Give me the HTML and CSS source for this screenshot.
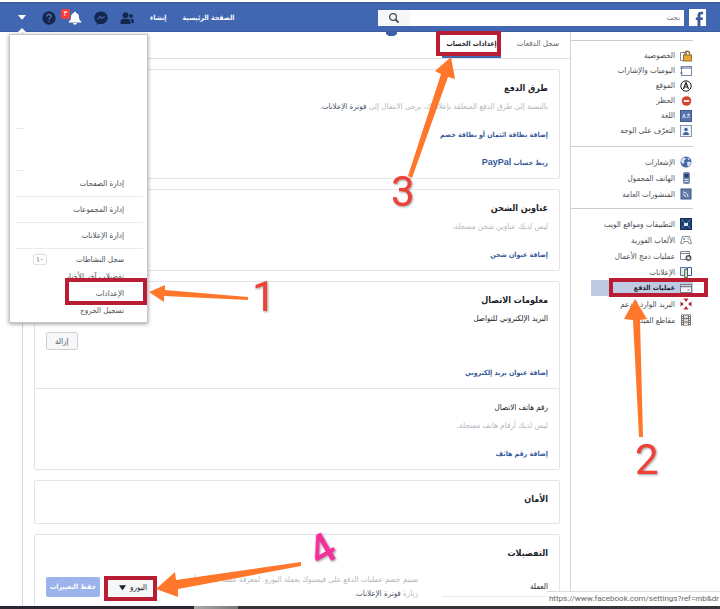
FILE: index.html
```html
<!DOCTYPE html>
<html lang="ar" dir="rtl">
<head>
    <meta charset="UTF-8">
    <meta name="viewport" content="width=device-width, initial-scale=1.0">
    <title>إعدادات الحساب</title>
    <link rel="stylesheet" href="styles.css">
</head>
<body>

<header class="topbar">
    <a class="logo" href="#" aria-label="Facebook">
        <svg viewBox="0 0 17 17" width="17" height="17"><rect width="17" height="17" fill="#fff"/><path d="M8.5 17v-6H6.8V8.4h1.7V6.6c0-2.6 1.4-3.9 3.7-3.9h1.9v2.5h-1.4c-1 0-1.3.5-1.3 1.4v1.8H14l-.4 2.6h-2.2v6z" fill="#3b5998"/></svg>
    </a>
    <form class="search">
        <input type="text" placeholder="بحث" aria-label="بحث">
        <button type="button" aria-label="بحث">
            <svg viewBox="0 0 12 12" width="12" height="12" fill="none" stroke="#444950"><circle cx="5" cy="5" r="3.4" stroke-width="1.3"/><path d="M7.6 7.6l3 3" stroke-width="1.8"/></svg>
        </button>
    </form>
    <nav class="links">
        <a href="#">الصفحة الرئيسية</a>
        <a href="#">إنشاء</a>
    </nav>
    <nav class="icons">
        <a href="#" aria-label="الأصدقاء"><svg viewBox="0 0 14 14" width="14" height="14" fill="#14284f"><circle cx="5.5" cy="4.2" r="2.9"/><path d="M.5 13v-2.2c0-2 1.6-3 3.2-3h3.6c1.8 0 3.2 1.200 3.200 3V13z"/><circle cx="11" cy="5" r="1.900"/><path d="M10.400 7.800h1.300c1.300 0 2.100.9 2.100 2.100V12h-2.400v-1.700c0-1-.4-1.900-1-2.500z"/></svg></a>
        <a href="#" aria-label="الرسائل"><svg viewBox="0 0 14 14" width="14" height="14"><path d="M7 .4C3.200.4.300 3.200.300 6.700c0 2 .9 3.600 2.400 4.800V14l2.200-1.200c.7.200 1.400.3 2.100.3 3.800 0 6.700-2.800 6.700-6.400S10.800.4 7 .4z" fill="#14284f"/><path d="M3.500 8.300l2.600-2.800 1.900 1.700 2.600-1.700" fill="none" stroke="#4267b2" stroke-width="1.200"/></svg></a>
        <a class="bell" href="#" aria-label="الإشعارات"><svg viewBox="0 0 14 14" width="14" height="14" fill="#fff"><path d="M7 .8c.7 0 1.100.5 1.100 1.200C10.200 2.500 11 4 11 6c0 2.500.7 3.400 2.200 4.500v1H.8v-1C2.300 9.400 3 8.500 3 6c0-2 .8-3.500 2.900-4C5.900 1.300 6.300.8 7 .8zM5.200 12h3.600c0 1-.8 1.700-1.800 1.700S5.200 13 5.200 12z"/></svg><span class="count">٣</span></a>
        <a href="#" aria-label="مساعدة"><svg viewBox="0 0 14 14" width="14" height="14"><circle cx="7" cy="7" r="6.700" fill="#14284f"/><path d="M4.900 5.600C4.900 4.300 5.800 3.500 7 3.500s2.100.8 2.100 1.900C9.100 7 7 7 7 8.600M7 9.700v1.300" fill="none" stroke="#5674b0" stroke-width="1.300"/></svg></a>
        <a class="caret" href="#" aria-label="القائمة"><svg viewBox="0 0 8 5" width="8" height="5"><path d="M0 0h8L4.600 4.300H3.400z" fill="#fff"/></svg></a>
    </nav>
    <ul class="menu">
        <li class="stub"></li>
        <li class="stub"></li>
        <li class="line"><a href="#">إدارة الصفحات</a></li>
        <li class="line"><a href="#">إدارة المجموعات</a></li>
        <li class="line"><a href="#">إدارة الإعلانات</a></li>
        <li class="log"><a href="#">سجل النشاطات</a><span class="tag">١٠</span></li>
        <li><a href="#">تفضيلات آخر الأخبار</a></li>
        <li><a href="#">الإعدادات</a></li>
        <li><a href="#">تسجيل الخروج</a></li>
    </ul>
</header>

<div class="page">
    <aside class="sidebar">
        <ul class="tight">
            <li><svg viewBox="0 0 12 12"><path d="M.5 2.500h6v8h-6z" fill="#fff" stroke="#7b88a5"/><path d="M5 5V3.500a2.300 2.300 0 0 1 4.600 0V5" fill="none" stroke="#8a7333" stroke-width="1.400"/><rect x="3.500" y="5" width="8" height="6" fill="#e6a733" stroke="#96712a"/></svg><a href="#">الخصوصية</a></li>
            <li><svg viewBox="0 0 12 12"><rect x="1.500" y="1.500" width="10" height="9" fill="#fff" stroke="#7b88a5"/><path d="M2 3h9" stroke="#a9b5cf" stroke-width="2"/><path d="M0 3h3M0 8h3" stroke="#6b7fa8"/></svg><a href="#">اليوميات والإشارات</a></li>
            <li><svg viewBox="0 0 12 12" fill="none" stroke="#222"><circle cx="6" cy="6" r="5.200"/><path d="M3.500 9L6 2.500 8.500 9M4.500 7h3" stroke-width="1.200"/></svg><a href="#">الموقع</a></li>
            <li><svg viewBox="0 0 12 12"><circle cx="6.500" cy="6" r="4.800" fill="#d5452f"/><path d="M3.800 6h5.400" stroke="#fff" stroke-width="1.800"/></svg><a href="#">الحظر</a></li>
            <li><svg viewBox="0 0 12 12"><rect x=".5" y=".5" width="11" height="11" fill="#5a74ad" stroke="#43598c"/><path d="M2.500 8l1.500-4 1.500 4M3 7h2M7 4.500h3M8.500 3.500v1M7 8l2.600-3.500M7.600 5.500L10 8" fill="none" stroke="#dfe6f5" stroke-width=".8"/></svg><a href="#">اللغة</a></li>
            <li><svg viewBox="0 0 12 12"><rect x=".5" y=".5" width="11" height="11" fill="#eef2f9" stroke="#8795b5"/><circle cx="6" cy="4.500" r="1.700" fill="#425f9c"/><path d="M3 10c0-2 1.300-3 3-3s3 1 3 3z" fill="#425f9c"/></svg><a href="#">التعرّف على الوجه</a></li>
        </ul>
        <ul>
            <li><svg viewBox="0 0 12 12"><circle cx="6" cy="6" r="5.500" fill="#4568a8"/><path d="M2 2.500l3-1 1 1.500-2 1.500.5 2L3 8 .8 5.500zM7 6l3-.5 1 1.500-2 3.500-1.500-.5zM7.500 1.500l2.500 1.800-2 .7z" fill="#dbe5f4"/></svg><a href="#">الإشعارات</a></li>
            <li><svg viewBox="0 0 12 12"><rect x="3.500" y=".5" width="6" height="11" rx="1" fill="#6680b3" stroke="#7c899f"/><rect x="4.500" y="2" width="4" height="3.500" fill="#263d70"/><path d="M4.500 7.500h4M4.500 9.500h4" stroke="#dce4f2"/></svg><a href="#">الهاتف المحمول</a></li>
            <li><svg viewBox="0 0 12 12"><rect x="1" y="1" width="10" height="10" fill="#627ba9" stroke="#43577f"/><path d="M3 4c2.800 0 5 2.200 5 5M3 6.500C4.400 6.500 5.500 7.600 5.500 9" fill="none" stroke="#e2e9f5"/></svg><a href="#">المنشورات العامة</a></li>
        </ul>
        <ul>
            <li><svg viewBox="0 0 12 12"><rect x=".5" y=".5" width="11" height="11" fill="#1d3f70" stroke="#16305a"/><path d="M1.500 1.500l9 9M10.500 1.500l-9 9" stroke="#6089bd"/><rect x="4" y="5" width="4" height="3" fill="#d7e4f4"/></svg><a href="#">التطبيقات ومواقع الويب</a></li>
            <li><svg viewBox="0 0 12 12" fill="none" stroke="#898f9a"><path d="M2.500 2.500h7L11.400 9.500H9L8 7.500H4L3 9.500H.6z"/><path d="M3 5h2M4 4v2M7.500 5h1.500"/></svg><a href="#">الألعاب الفورية</a></li>
            <li><svg viewBox="0 0 12 12"><path d="M.5 1.500h9v8h-9zM.5 3.500h9" fill="#fff" stroke="#80858f"/><circle cx="8.500" cy="8" r="2.300" fill="#ddd" stroke="#555" stroke-width="1.400"/></svg><a href="#">عمليات دمج الأعمال</a></li>
            <li><svg viewBox="0 0 12 12"><path d="M.5 1.500h6v8h-6z" fill="#e4eaf4" stroke="#566f9f"/><path d="M4.500 3.500h3v8h-3z" fill="#cbdcab" stroke="#607d3d"/><path d="M7.500 1.500h4v8h-4z" fill="#fff" stroke="#3c5d98"/></svg><a href="#">الإعلانات</a></li>
            <li class="selected"><svg viewBox="0 0 12 12"><rect x=".5" y="2.500" width="11" height="8" fill="#f3f5f8" stroke="#777f8f"/><path d="M1 4.500h10" stroke="#777f8f" stroke-width="1.500"/><path d="M7.500 8h2" stroke="#777f8f"/></svg><a href="#">عمليات الدفع</a></li>
            <li><svg viewBox="0 0 12 12"><path d="M3.500.5h5L6 4zM3.500 11.500h5L6 8zM.5 3.500v5L4 6zM11.500 3.500v5L8 6z" fill="#b22632"/><path d="M1.500 2.500l1-1M9.500 1.500l1 1M1.500 9.500l1 1M9.500 10.500l1-1" stroke="#d9dce1"/></svg><a href="#">البريد الوارد للدعم</a></li>
            <li><svg viewBox="0 0 12 12"><rect x="1" y=".5" width="10" height="11" fill="#77716c"/><path d="M4 1.500h4v2.500H4zM4 5h4v2.500H4zM4 8.500h4V11H4z" fill="#dedbd7"/><path d="M2.500 1v10M9.500 1v10" stroke="#fff" stroke-dasharray="1 1"/></svg><a href="#">مقاطع الفيديو</a></li>
        </ul>
    </aside>

    <main class="content">
        <nav class="tabs">
            <a href="#">سجل الدفعات</a>
            <a class="active" href="#">إعدادات الحساب</a>
        </nav>

        <section class="card">
            <div class="block">
                <h2>طرق الدفع</h2>
                <p class="muted">بالنسبة إلى طرق الدفع المتعلقة بإعلاناتك، يرجى الانتقال إلى <a href="#">فوترة الإعلانات</a>.</p>
                <a class="action" href="#">إضافة بطاقة ائتمان أو بطاقة خصم</a>
                <a class="action" href="#">ربط حساب <span class="brand">PayPal</span></a>
            </div>
        </section>

        <section class="card">
            <div class="block">
                <h2>عناوين الشحن</h2>
                <p class="muted">ليس لديك عناوين شحن مسجلة.</p>
                <a class="action" href="#">إضافة عنوان شحن</a>
            </div>
        </section>

        <section class="card">
            <div class="block">
                <h2>معلومات الاتصال</h2>
                <h3>البريد الإلكتروني للتواصل</h3>
                <button class="remove" type="button">إزالة</button>
                <a class="action" href="#">إضافة عنوان بريد إلكتروني</a>
            </div>
            <div class="block">
                <h3>رقم هاتف الاتصال</h3>
                <p class="muted">ليس لديك أرقام هاتف مسجلة.</p>
                <a class="action" href="#">إضافة رقم هاتف</a>
            </div>
        </section>

        <section class="card">
            <div class="block security">
                <h2>الأمان</h2>
            </div>
        </section>

        <section class="card">
            <div class="block last">
                <h2>التفضيلات</h2>
                <div class="currency">
                    <h3>العملة</h3>
                    <p class="muted">سيتم خصم عمليات الدفع على فيسبوك بعملة اليورو. لمعرفة عملة حسابك أو زيارة&nbsp;<a href="#">فوترة الإعلانات</a>.</p>
                    <button class="pick" type="button">اليورو <svg viewBox="0 0 8 5" width="7" height="5"><path d="M0 0h8L4.600 5H3.400z" fill="#1d2129"/></svg></button>
                    <button class="save" type="button">حفظ التغييرات</button>
                </div>
            </div>
        </section>
    </main>
</div>

<footer class="taskbar">
    <div class="status">https://www.facebook.com/settings?ref=mb&amp;dr</div>
</footer>

<!-- numbered steps -->
<svg class="steps" viewBox="0 0 720 609" width="720" height="609">
    <path d="M386 32h11v2l-3 2h-5l-3-2z" fill="#3b5fa8"/>
    <g fill="none" stroke="#b91d33" stroke-width="4">
        <rect x="438" y="33" width="61" height="21"/>
        <rect x="67" y="280" width="78" height="23"/>
        <rect x="611" y="280" width="95" height="15"/>
        <rect x="106" y="578" width="49" height="21"/>
    </g>
    <g fill="#ff772b">
        <path d="M451 57l4 22-7-2-36 101-4-2 33-102-6-3z"/>
        <path d="M149 292l16-7v5l83 7v3l-84-4v6z"/>
        <path d="M635 299l12 20-7 1 3 117h-4l-6-117-9-1z"/>
        <path d="M156 589l19-17 1 8 125-18v4l-123 23v8z"/>
    </g>
    <g class="number">
        <text x="252" y="311">1</text>
        <text x="635" y="474">2</text>
        <text x="391" y="206">3</text>
        <text class="pink" x="0" y="0" transform="translate(319 568) rotate(-30)">4</text>
    </g>
</svg>

</body>
</html>
```
FILE: styles.css
```css
* {
    box-sizing: border-box;
}
body {
    display: flex;
    flex-direction: column;
    margin: 0;
    padding-top: 2px;
    height: 100vh;
    overflow: hidden;
    position: relative;
    background: white;
    color: #1d2129;
    font-family: "DejaVu Sans Condensed", "DejaVu Sans", sans-serif;
    font-size: 8px;
}
a {
    color: inherit;
    text-decoration: none;
}
ul {
    list-style: none;
    margin: 0;
    padding: 0;
}
svg {
    display: block;
    flex: none;
}
button, input {
    font: inherit;
    border: 0;
    margin: 0;
}
h2, h3, p {
    margin: 0;
}

/* top bar */
.topbar {
    position: relative;
    display: flex;
    flex: none;
    align-items: center;
    height: 30px;
    padding: 0 14px 0 18px;
    background: #4267b2;
    border-top: 2px solid #3c5d9f;
    border-bottom: 1px solid #3c5d9f;
}
.search {
    display: flex;
    width: 306px;
    height: 16px;
    margin-right: 5px;
    background: white;
}
.search input {
    flex: 1;
    min-width: 0;
    padding: 0 4px;
    background: none;
}
.search input::placeholder {
    color: #777;
}
.search button {
    display: flex;
    align-items: center;
    justify-content: center;
    width: 32px;
    padding: 0;
    background: #f6f7f9;
}
.links {
    display: flex;
    gap: 16px;
    margin-right: auto;
    color: white;
    font-size: 7px;
    font-weight: bold;
}
.icons {
    display: flex;
    align-items: center;
    gap: 12px;
    margin-right: 16px;
}
.bell {
    position: relative;
}
.count {
    position: absolute;
    top: -2px;
    left: -7px;
    width: 9px;
    height: 10px;
    border-radius: 2px;
    background: #fa3e3e;
    color: white;
    line-height: 10px;
    text-align: center;
}
.caret {
    padding-right: 4px;
}

/* account menu */
.menu {
    position: absolute;
    top: 30px;
    left: 9px;
    z-index: 2;
    width: 139px;
    padding: 0 4px 3px 6px;
    background: white;
    border: 1px solid #c8c8c8;
    box-shadow: 0 1px 4px rgba(0, 0, 0, 0.4);
    color: #4b4f56;
}
.menu::before {
    content: "";
    position: absolute;
    top: -7px;
    left: 8px;
    border: 4px solid transparent;
    border-top: 0;
    border-bottom-color: white;
}
.menu li {
    padding-right: 19px;
    line-height: 17px;
}
.menu .line {
    border-bottom: 1px solid #e9ebee;
    line-height: 25px;
}
.menu .stub {
    width: 9px;
    height: 42px;
    margin-right: auto;
    padding: 0;
    border-bottom: 1px solid #e9ebee;
}
.menu .stub:first-child {
    height: 94px;
}
.menu .log {
    display: flex;
    align-items: center;
    justify-content: space-between;
    padding-top: 2px;
    padding-left: 17px;
}
.tag {
    padding: 0 2px;
    border: 1px solid #dddfe2;
    border-radius: 2px;
    line-height: 9px;
}

/* columns */
.page {
    display: flex;
    flex: 1;
    min-height: 0;
    overflow: hidden;
    padding-left: 22px;
}
.sidebar {
    width: 149px;
    padding: 8px 27px 0 0;
    color: #4b4f56;
}
.sidebar ul {
    padding: 7px 0 6px;
    border-top: 1px solid #ccc;
}
.sidebar li {
    display: flex;
    align-items: center;
    gap: 5px;
    height: 16px;
    margin-left: 20px;
    padding-right: 1px;
}
.sidebar .tight {
    padding-bottom: 8px;
}
.sidebar .tight li {
    height: 15px;
}
.sidebar li svg {
    width: 12px;
    height: 12px;
}
.sidebar .selected {
    background: #bfcbe3;
    color: #1d2129;
    font-size: 7px;
    font-weight: bold;
}
.content {
    flex: 1;
    min-width: 0;
    border: solid #d3d6db;
    border-width: 0 1px;
}
.tabs {
    display: flex;
    gap: 16px;
    height: 27px;
    padding-right: 11px;
    border-bottom: 1px solid #dddfe2;
    color: #666;
    line-height: 24px;
}
.tabs .active {
    padding: 0 4px;
    border-bottom: 2px solid #4267b2;
    color: #1d2129;
    font-size: 7px;
    font-weight: bold;
}

/* cards */
.card {
    margin: 10px 10px 0 11px;
    border: 1px solid #e2e4e7;
    border-radius: 2px;
}
.block {
    padding: 8px 11px 6px;
}
.block + .block {
    padding-top: 10px;
    border-top: 1px solid #e2e4e7;
}
h2 {
    font-size: 9px;
    line-height: 20px;
}
h3 {
    font-size: 8px;
    font-weight: normal;
    line-height: 18px;
}
.muted {
    color: #b4b7bd;
    line-height: 18px;
}
.muted a {
    color: #4b5468;
}
.action {
    display: block;
    width: fit-content;
    margin-top: 10px;
    color: #365899;
    font-size: 7px;
    font-weight: bold;
    line-height: 18px;
}
.brand {
    font-family: "Liberation Sans", sans-serif;
    font-size: 9px;
    line-height: 1;
}
.remove {
    display: block;
    height: 18px;
    margin: 4px auto 14px 0;
    padding: 0 8px;
    background: #f6f7f9;
    border: 1px solid #ced0d4;
    border-radius: 2px;
    color: #4b4f56;
}
.security {
    padding-bottom: 14px;
}
.last {
    padding-bottom: 40px;
}
.currency {
    display: flex;
    align-items: center;
    gap: 8px;
    padding-top: 10px;
}
.currency h3 {
    width: 106px;
    margin-left: 16px;
    border-bottom: 1px solid #e9ebee;
}
.currency .muted {
    flex: 1;
    line-height: 14px;
}
.pick, .save {
    display: flex;
    align-items: center;
    justify-content: center;
    gap: 4px;
    height: 20px;
    padding: 0;
    border-radius: 2px;
    white-space: nowrap;
}
.pick {
    width: 50px;
    background: #f6f7f9;
    color: #1d2129;
}
.save {
    width: 54px;
    background: #9cb4ec;
    color: white;
    font-size: 7px;
    font-weight: bold;
}

/* browser edge */
.taskbar {
    position: relative;
    flex: none;
    height: 3px;
    background: linear-gradient(to right, #2d2630 27%, #aaa 27%, #777 33%, #38343b 33%);
}
.status {
    position: absolute;
    right: 0;
    bottom: 3px;
    padding: 0 1px 0 2px;
    background: white;
    border-top: 1px solid #ddd;
    color: #666;
    direction: ltr;
    font-family: Roboto, sans-serif;
    line-height: 14px;
    white-space: nowrap;
}

.steps {
    position: absolute;
    top: 0;
    left: 0;
    z-index: 3;
    pointer-events: none;
}
.number {
    direction: ltr;
    fill: #ee4035;
    font-family: Roboto, sans-serif;
    font-size: 42px;
    filter: drop-shadow(1px 1px 1px rgba(0, 0, 0, 0.4));
}
.pink {
    fill: #f62d9b;
    font-weight: 500;
}
```
